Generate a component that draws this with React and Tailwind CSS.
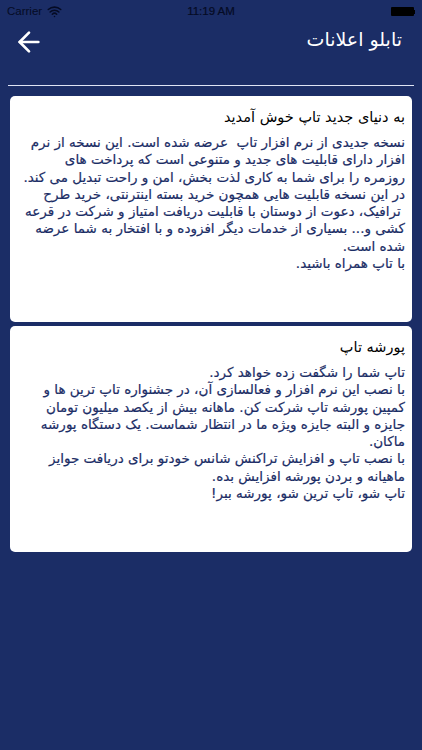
import { ArrowLeft, Wifi } from "lucide-react"

const notices = [
  {
    title: "به دنیای جدید تاپ خوش آمدید",
    lines: [
      "نسخه جدیدی از نرم افزار تاپ  عرضه شده است. این نسخه از نرم",
      "افزار دارای قابلیت های جدید و متنوعی است که پرداخت های",
      "روزمره را برای شما به کاری لذت بخش، امن و راحت تبدیل می کند.",
      "در این نسخه قابلیت هایی همچون خرید بسته اینترنتی، خرید طرح",
      " ترافیک، دعوت از دوستان با قابلیت دریافت امتیاز و شرکت در قرعه",
      "کشی و... بسیاری از خدمات دیگر افزوده و با افتخار به شما عرضه",
      "شده است.",
      "با تاپ همراه باشید.",
    ],
  },
  {
    title: "پورشه تاپ",
    lines: [
      "تاپ شما را شگفت زده خواهد کرد.",
      "با نصب این نرم افزار و فعالسازی آن، در جشنواره تاپ ترین ها و",
      "کمپین پورشه تاپ شرکت کن. ماهانه بیش از یکصد میلیون تومان",
      "جایزه و البته جایزه ویژه ما در انتظار شماست. یک دستگاه پورشه",
      "ماکان.",
      "با نصب تاپ و افزایش تراکنش شانس خودتو برای دریافت جوایز",
      "ماهیانه و بردن پورشه افزایش بده.",
      "تاپ شو، تاپ ترین شو، پورشه ببر!",
    ],
  },
]

function NoticeCard({ title, lines }) {
  return (
    <div dir="rtl" className="h-[226px] rounded-[5px] bg-white pt-[9px] pr-[7px] pl-[3px] overflow-hidden">
      <h2 className="text-[14.5px] leading-[24px] font-normal text-black whitespace-nowrap">{title}</h2>
      <div className="mt-[5px] text-[13.5px] leading-[17.3px] text-[#1b2d66] tracking-[0.1px] [-webkit-text-stroke:0.2px_#1b2d66]">
        {lines.map((line, i) => (
          <div key={i} className="whitespace-pre">{line}</div>
        ))}
      </div>
    </div>
  )
}

export default function App() {
  return (
    <div className="w-[422px] h-[750px] overflow-hidden bg-[#1b2d66] font-['DejaVu_Sans',sans-serif]">
      <div className="h-[22px] pt-[1px] flex items-center pl-[7px] pr-[7px] text-[11.5px] text-[#050b24] font-['Liberation_Sans',sans-serif]">
        <div className="flex-1 flex items-center gap-[5px]">
          <span>Carrier</span>
          <Wifi className="w-[15px] h-[15px]" strokeWidth={2.5} />
        </div>
        <span className="font-medium [-webkit-text-stroke:0.2px_#050b24]">11:19 AM</span>
        <div className="flex-1 flex items-center justify-end">
          <div className="w-[23px] h-[9px] rounded-[1px] bg-black" />
          <div className="w-[1px] h-[4px] bg-black" />
        </div>
      </div>

      <div className="h-[64px] mx-[8px] border-b border-[#dfe4f5] flex items-start justify-between pl-[5px] pr-[12px]">
        <ArrowLeft className="w-[32px] h-[32px] mt-[4px] text-white" strokeWidth={2} />
        <span dir="rtl" className="mt-[4px] text-[19px] leading-[26px] text-white whitespace-nowrap">تابلو اعلانات</span>
      </div>

      <div className="mt-[10px] mx-[10px] flex flex-col gap-[4px]">
        {notices.map((n) => (
          <NoticeCard key={n.title} title={n.title} lines={n.lines} />
        ))}
      </div>
    </div>
  )
}
